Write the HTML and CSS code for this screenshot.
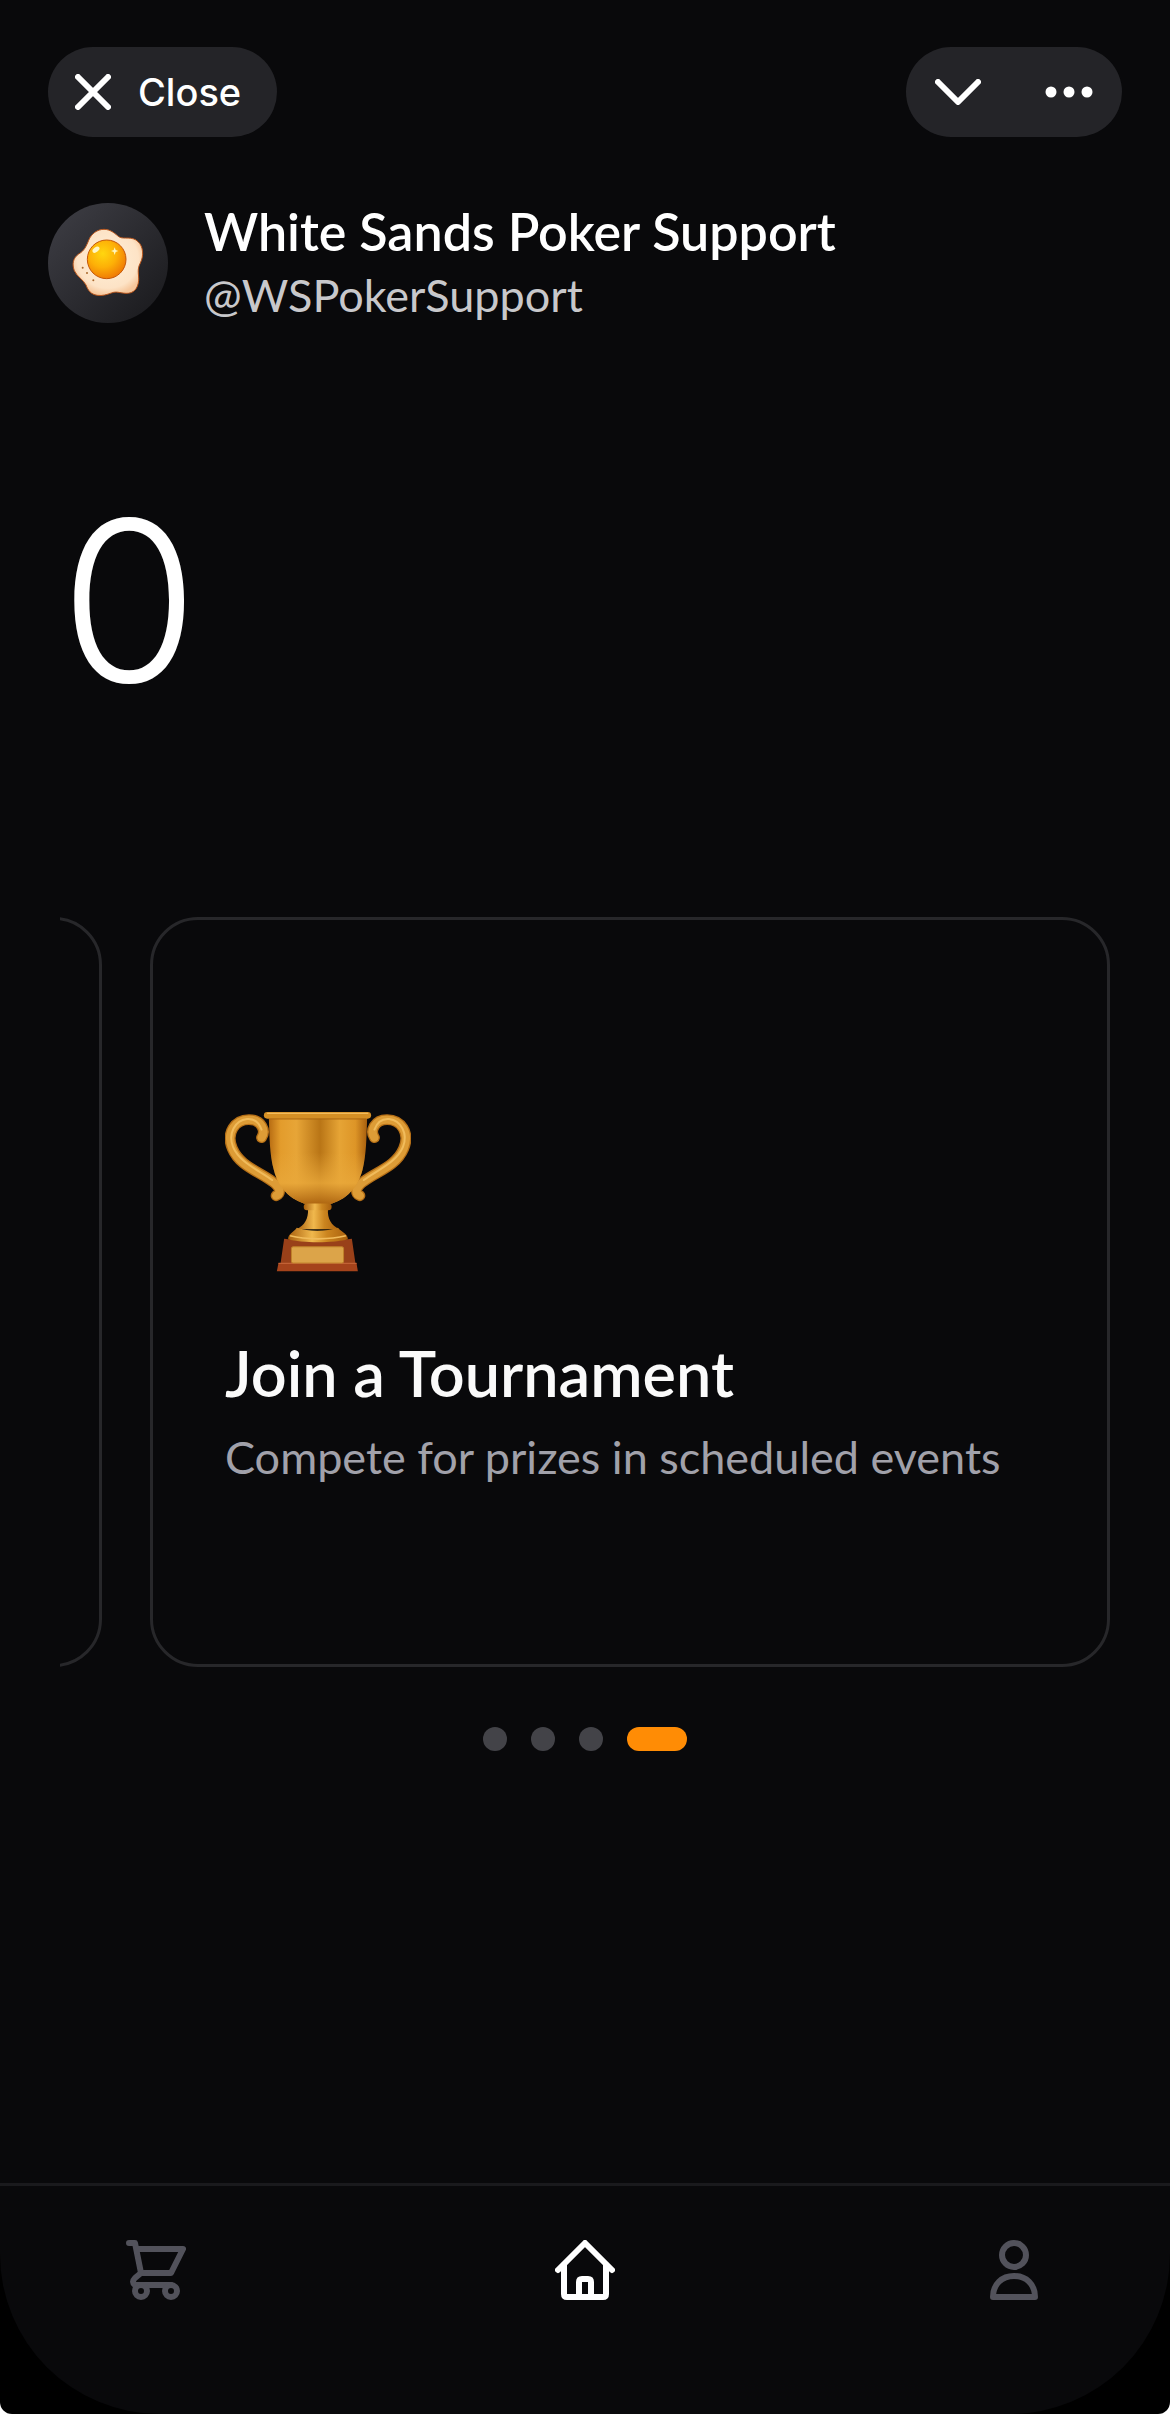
FILE: index.html
```html
<!DOCTYPE html>
<html lang="en">
<head>
    <meta charset="UTF-8">
    <meta name="viewport" content="width=device-width, initial-scale=1.0">
    <title>White Sands Poker Support</title>
    <link rel="stylesheet" href="styles.css">
</head>
<body>
    <div class="screen">
        <div class="app">
            <header class="topbar">
                <button class="pill close" type="button">
                    <svg width="36" height="36" viewBox="0 0 36 36" fill="none" stroke="currentColor" stroke-width="6" stroke-linecap="round" aria-hidden="true">
                        <path d="M3 3L33 33M33 3L3 33"/>
                    </svg>
                    Close
                </button>
                <div class="pill actions">
                    <button class="icon-btn" type="button" aria-label="Minimize">
                        <svg width="46" height="26" viewBox="0 0 46 26" fill="none" stroke="currentColor" stroke-width="6" stroke-linecap="round" stroke-linejoin="round" aria-hidden="true">
                            <path d="M3 3L23 23L43 3"/>
                        </svg>
                    </button>
                    <button class="icon-btn" type="button" aria-label="More">
                        <svg width="48" height="12" viewBox="0 0 48 12" fill="currentColor" aria-hidden="true">
                            <circle cx="6" cy="6" r="5.5"/>
                            <circle cx="24" cy="6" r="5.5"/>
                            <circle cx="42" cy="6" r="5.5"/>
                        </svg>
                    </button>
                </div>
            </header>

            <section class="profile">
                <div class="avatar">
                    <svg width="120" height="120" viewBox="0 0 360 360" aria-hidden="true">
                        <defs>
                            <radialGradient id="yolk" cx="0.4" cy="0.35" r="0.65">
                                <stop offset="0" stop-color="#ffd60f"/>
                                <stop offset="0.55" stop-color="#fdb007"/>
                                <stop offset="1" stop-color="#f07d05"/>
                            </radialGradient>
                            <radialGradient id="eggWhite" cx="0.5" cy="0.45" r="0.55">
                                <stop offset="0" stop-color="#fff0d9"/>
                                <stop offset="0.8" stop-color="#fde3c6"/>
                                <stop offset="1" stop-color="#f6c79c"/>
                            </radialGradient>
                        </defs>
                        <path d="M168 79C190 79 202 94 214 102C228 110 252 98 270 116C286 130 288 158 277 180C266 200 273 214 272 232C270 258 256 272 234 271C214 270 206 264 190 270C176 275 164 279 148 277C128 274 120 262 114 246C106 230 88 222 79 203C72 184 74 166 92 153C108 144 114 132 122 112C130 92 148 79 168 79Z" fill="url(#eggWhite)" stroke="#b9561c" stroke-width="3"/>
                        <circle cx="176" cy="169" r="58" fill="url(#yolk)" stroke="#c55708" stroke-width="3"/>
                        <ellipse cx="144" cy="140" rx="12" ry="7" transform="rotate(-38 144 140)" fill="#fff7c4"/>
                        <path d="M200 133L203 141L211 144L203 147L200 156L197 147L189 144L197 141Z" fill="#fff6bd"/>
                        <g fill="#a9682d">
                            <circle cx="104" cy="194" r="3"/>
                            <circle cx="117" cy="210" r="3"/>
                            <circle cx="136" cy="232" r="3"/>
                        </g>
                    </svg>
                </div>
                <div class="identity">
                    <h1 class="name">White Sands Poker Support</h1>
                    <div class="handle">@WSPokerSupport</div>
                </div>
            </section>

            <div class="balance">0</div>

            <section class="carousel">
                <div class="track">
                    <article class="card"></article>
                    <article class="card">
                        <svg class="trophy" width="186" height="162" viewBox="48 60 560 488" aria-hidden="true">
                            <defs>
                                <linearGradient id="cup" x1="0" x2="1">
                                    <stop offset="0" stop-color="#b76c12"/>
                                    <stop offset="0.12" stop-color="#e39c2c"/>
                                    <stop offset="0.28" stop-color="#e7a537"/>
                                    <stop offset="0.52" stop-color="#b97516"/>
                                    <stop offset="0.72" stop-color="#e6a435"/>
                                    <stop offset="0.88" stop-color="#dd9527"/>
                                    <stop offset="1" stop-color="#a85f0e"/>
                                </linearGradient>
                                <linearGradient id="cupLow" x1="0" y1="0" x2="0" y2="1">
                                    <stop offset="0.4" stop-color="#e9a83a" stop-opacity="0"/>
                                    <stop offset="0.75" stop-color="#e9a83a" stop-opacity="0.8"/>
                                    <stop offset="1" stop-color="#a9600e" stop-opacity="0.9"/>
                                </linearGradient>
                                <linearGradient id="stem" x1="0" x2="1">
                                    <stop offset="0" stop-color="#a9600e"/>
                                    <stop offset="0.4" stop-color="#f0b84d"/>
                                    <stop offset="0.65" stop-color="#cb851f"/>
                                    <stop offset="1" stop-color="#a9600e"/>
                                </linearGradient>
                            </defs>
                            <g id="handle" fill="none" stroke-linecap="round" stroke-linejoin="round">
                                <path d="M158 140C172 120 158 86 120 86C78 86 50 126 70 173C92 226 150 242 190 272C218 292 216 310 202 315" stroke="#b56f17" stroke-width="33"/>
                                <path d="M158 140C172 120 158 86 120 86C78 86 50 126 70 173C92 226 150 242 190 272C218 292 216 310 202 315" stroke="#dd9c36" stroke-width="25"/>
                                <path d="M158 116C150 94 136 82 114 84C78 88 56 128 72 168C92 216 150 238 190 268" stroke="#f1bc5c" stroke-width="6"/>
                            </g>
                            <use href="#handle" transform="translate(656 0) scale(-1 1)"/>
                            <path d="M180 80H476C474 140 474 190 462 238C446 298 404 335 352 343H304C254 335 210 298 195 238C182 190 182 140 180 80Z" fill="url(#cup)"/>
                            <path d="M180 80H476C474 140 474 190 462 238C446 298 404 335 352 343H304C254 335 210 298 195 238C182 190 182 140 180 80Z" fill="url(#cupLow)"/>
                            <rect x="165" y="63" width="323" height="20" rx="10" fill="#d58f24"/>
                            <path d="M176 67H478" stroke="#f2bb5b" stroke-width="4" stroke-linecap="round"/>
                            <path d="M180 84H474" stroke="#a9650f" stroke-width="3"/>
                            <path d="M298 356H358C356 385 368 404 392 416H264C288 404 299 385 298 356Z" fill="url(#stem)"/>
                            <rect x="285" y="339" width="84" height="20" rx="10" fill="url(#stem)"/>
                            <path d="M226 445Q328 462 430 445L441 520H215Z" fill="#994019"/>
                            <path d="M264 412C300 424 352 424 388 412C398 424 418 430 418 446C380 458 276 458 238 446C238 430 256 424 264 412Z" fill="url(#stem)"/>
                            <path d="M244 436C290 448 366 448 412 436" fill="none" stroke="#f1bc5c" stroke-width="5"/>
                            <path d="M209 518H444L448 543H204Z" fill="#a5431b"/>
                            <path d="M209 519H444" stroke="#c26135" stroke-width="4"/>
                            <rect x="248" y="469" width="157" height="49" rx="5" fill="#dca449" stroke="#c0812a" stroke-width="3"/>
                        </svg>
                        <h2 class="card-title">Join a Tournament</h2>
                        <p class="card-text">Compete for prizes in scheduled events</p>
                    </article>
                </div>
            </section>

            <div class="dots">
                <button class="dot" type="button" aria-label="Slide 1"></button>
                <button class="dot" type="button" aria-label="Slide 2"></button>
                <button class="dot" type="button" aria-label="Slide 3"></button>
                <button class="dot active" type="button" aria-label="Slide 4"></button>
            </div>

            <nav class="tabbar">
                <a class="tab" href="#shop" aria-label="Shop">
                    <svg width="60" height="60" viewBox="0 0 60 60" fill="none" stroke="currentColor" stroke-width="6" stroke-linecap="round" stroke-linejoin="round" aria-hidden="true">
                        <path d="M3 3H9L15 33H45L57 9H11"/>
                        <path d="M15 33L9 38Q5 42 9 45H45"/>
                        <circle cx="15" cy="51" r="6"/>
                        <circle cx="45" cy="51" r="6"/>
                    </svg>
                </a>
                <a class="tab active" href="#home" aria-label="Home">
                    <svg width="60" height="60" viewBox="0 0 60 60" fill="none" stroke="currentColor" stroke-width="6" stroke-linecap="round" stroke-linejoin="round" aria-hidden="true">
                        <path d="M3 30L30 3L57 30"/>
                        <path d="M9 25V54Q9 57 12 57H48Q51 57 51 54V25"/>
                        <path d="M24 57V42Q24 39 27 39H33Q36 39 36 42V57"/>
                    </svg>
                </a>
                <a class="tab" href="#profile" aria-label="Profile">
                    <svg width="60" height="60" viewBox="0 0 60 60" fill="none" stroke="currentColor" stroke-width="6" stroke-linejoin="round" aria-hidden="true">
                        <circle cx="30" cy="15" r="12"/>
                        <path d="M9 57C9 44 18 36 30 36C42 36 51 44 51 57Z"/>
                    </svg>
                </a>
            </nav>
        </div>
    </div>
</body>
</html>
```
FILE: styles.css
```css
* {
    box-sizing: border-box;
}
body {
    margin: 0;
    background: #fff;
    color: #fff;
    font-family: Lato, "Liberation Sans", sans-serif;
}
button {
    border: 0;
    padding: 0;
    background: none;
    color: inherit;
    font: inherit;
}
svg {
    display: block;
}
.screen {
    background: #000;
    border-radius: 0 0 12px 12px;
    overflow: hidden;
}
.app {
    display: flex;
    flex-direction: column;
    min-height: 100vh;
    background: #09090b;
    border-radius: 0 0 160px 160px;
    overflow: hidden;
}

/* top bar */
.topbar {
    display: flex;
    justify-content: space-between;
    padding: 47px 48px 0;
}
.pill {
    display: flex;
    align-items: center;
    height: 90px;
    border-radius: 45px;
    background: #242428;
}
.close {
    gap: 27px;
    padding: 0 36px 0 27px;
    font-family: Inter, sans-serif;
    font-size: 38px;
    font-weight: 500;
}
.actions {
    gap: 64px;
    padding: 0 29px;
}

/* profile */
.profile {
    display: flex;
    align-items: center;
    gap: 36px;
    padding: 62px 48px 0;
}
.avatar {
    flex: none;
    width: 120px;
    height: 120px;
    border-radius: 50%;
    background: linear-gradient(135deg, #3f3f46, #18181b);
}
.name {
    margin: 0;
    font-size: 52px;
    font-weight: 600;
    line-height: 64px;
}
.handle {
    color: #c8c8cb;
    font-size: 45px;
    font-weight: 400;
    line-height: 64px;
}

.balance {
    padding: 154px 60px 0;
    font-family: Inter, sans-serif;
    font-size: 224px;
    font-weight: 300;
    line-height: 240px;
}

/* carousel */
.carousel {
    margin: 196px 60px 0;
    overflow: hidden;
}
.track {
    display: flex;
    justify-content: flex-end;
    gap: 48px;
}
.card {
    display: flex;
    flex: none;
    flex-direction: column;
    justify-content: center;
    width: calc(100% - 90px);
    min-height: 750px;
    padding: 88px 72px 72px;
    border: 3px solid #27272a;
    border-radius: 48px;
}
.card-title {
    margin: 60px 0 0;
    color: #fafafa;
    font-size: 63px;
    font-weight: 600;
    line-height: 80px;
}
.card-text {
    margin: 12px 0 0;
    color: #a1a1aa;
    font-size: 45px;
    font-weight: 400;
    line-height: 64px;
}
.dots {
    display: flex;
    justify-content: center;
    gap: 24px;
    padding: 60px 0;
}
.dot {
    width: 24px;
    height: 24px;
    border-radius: 12px;
    background: #434348;
}
.dot.active {
    width: 60px;
    background: #ff8c05;
}

/* bottom navigation */
.tabbar {
    display: flex;
    justify-content: space-between;
    margin-top: auto;
    padding: 54px 126px 114px;
    border-top: 3px solid #1a1a1d;
}
.tab {
    color: #52525b;
}
.tab.active {
    color: #fff;
}
```
